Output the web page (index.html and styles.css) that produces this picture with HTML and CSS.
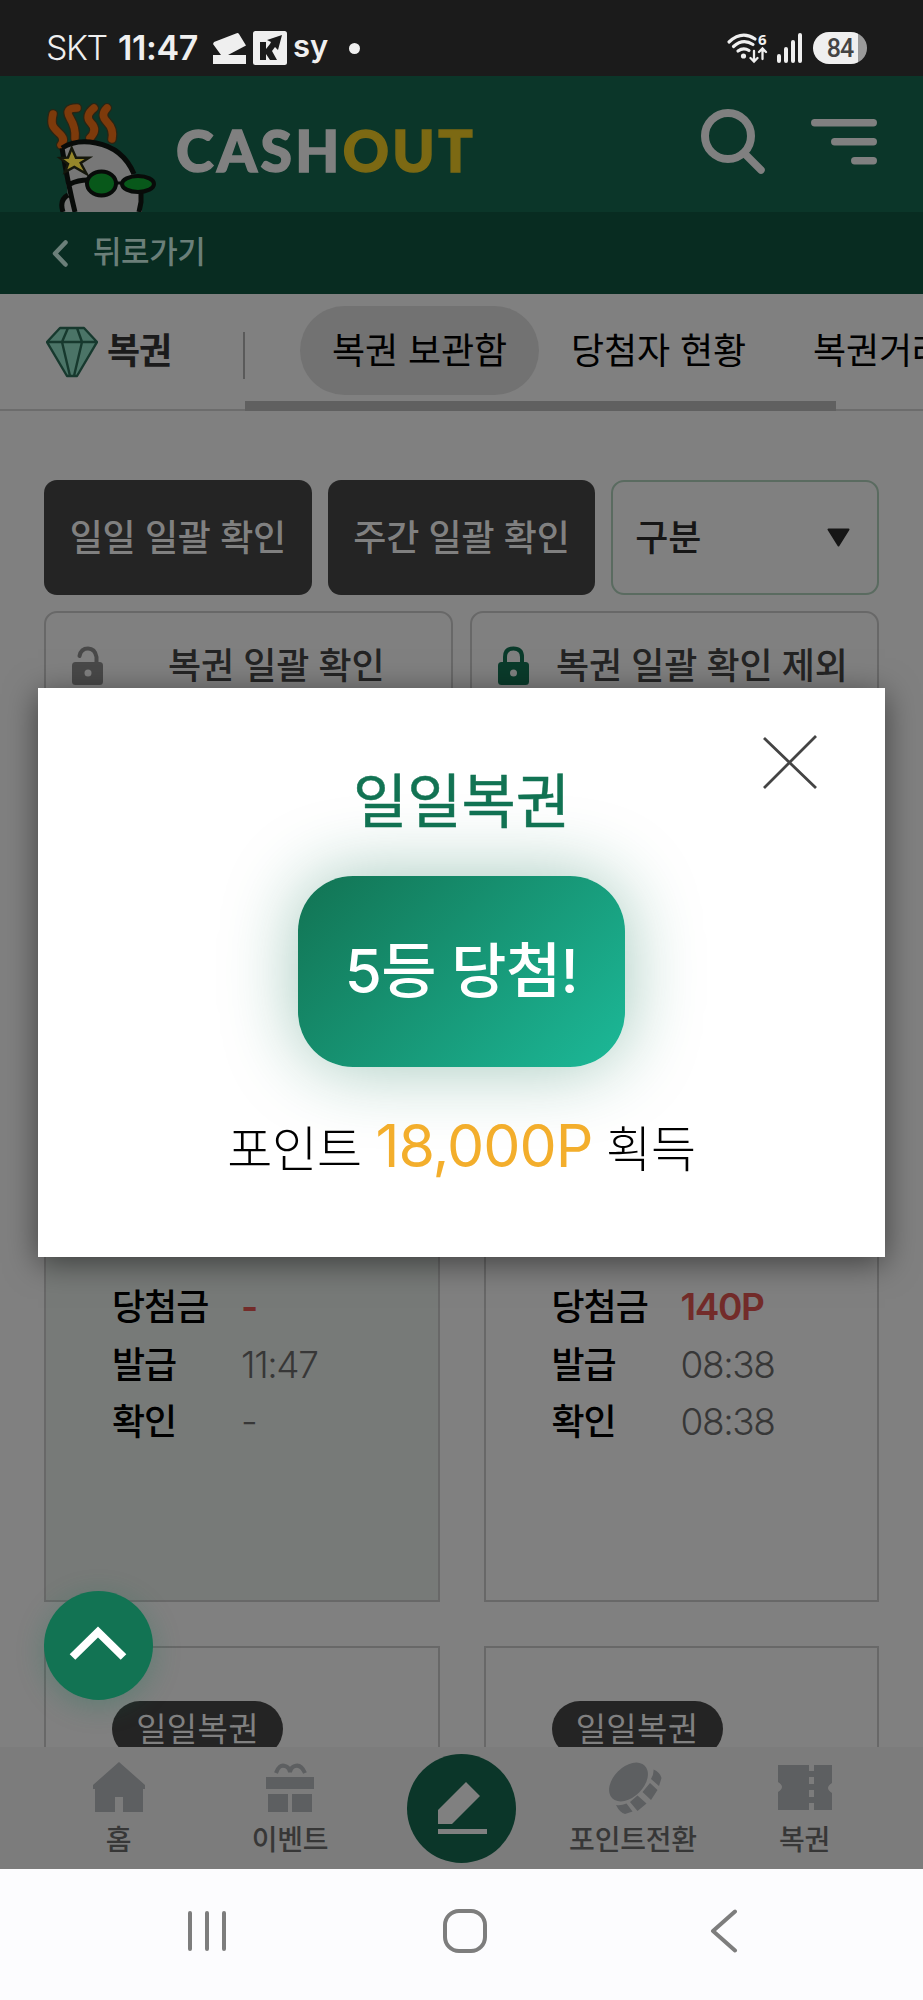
FILE: index.html
```html
<!DOCTYPE html>
<html lang="ko">
<head>
<meta charset="utf-8">
<title>CASHOUT</title>
<link rel="stylesheet" href="styles.css">
</head>
<body>
<div class="screen">
  <div class="status">
    <span class="carrier">SKT</span>
    <span class="clock">11:47</span>
    <svg class="notif" width="33" height="33" viewBox="0 0 33 33"><path d="M1 10 23 1.500q2-1 3 .5L33 13.500 15 23H33v9H0v-9H8L0 12z" fill="#efefef"/></svg>
    <svg class="notif-k" width="34" height="34" viewBox="0 0 34 34"><rect width="34" height="34" rx="2.500" fill="#efefef"/><path d="M7 11h6v7l4-5 1-2-4-2 15-5-4 15-3-3-3 4 5 9h-7l-4-6v6H7z" fill="#1b1b1b"/></svg>
    <span class="sy">sy</span>
    <span class="dot"></span>
    <svg class="signal" width="78" height="32" viewBox="0 0 78 32"><g fill="none" stroke="#efefef" stroke-width="3.200" stroke-linecap="round"><path d="M2 10Q15 -2 28 7M6.500 14.500Q16 6 26 12.500M11 19Q16.500 15 22 18.500"/><path d="M27 19v10M23.500 26l3.500 3.500 3.500-3.500M35.500 27V17M32 20l3.500-3.500 3.500 3.500" stroke-width="2.300"/><path d="M52 24v5M59 17v12M66 10v19M73 3v26" stroke-width="4"/></g><circle cx="16.500" cy="24" r="2.600" fill="#efefef"/><text x="31" y="13" class="six">6</text></svg>
    <span class="battery">84</span>
  </div>

  <header class="header">
    <svg class="mascot" width="110" height="112" viewBox="0 0 110 112">
      <g fill="none" stroke-linecap="round" stroke-linejoin="round">
        <path d="M7 14C4 26 8 28 13 33Q20 39 15 45M31 8Q18 8 24 18T29 38M48 8Q38 16 45 23T44 38M61 8Q54 15 61 22T66 39" stroke="#2a2514" stroke-width="10"/>
        <path d="M7 14C4 26 8 28 13 33Q20 39 15 45M31 8Q18 8 24 18T29 38M48 8Q38 16 45 23T44 38M61 8Q54 15 61 22T66 39" stroke="#7d3a0b" stroke-width="7.500"/>
      </g>
      <path d="M17 112Q14 103 22 96L16 48Q30 38 50 43Q76 48 87 74L96 94V112z" fill="#777"/>
      <path d="M17 112Q13 100 22 95M16 48Q22 84 29 112M16 48Q30 39 50 43Q77 48 88 74M95 90V102L93 112M24 84Q32 80 42 80" fill="none" stroke="#080b09" stroke-width="5"/>
      <path d="M25.700 48 30 57.700H43L34.700 63 40.700 74 28.300 67 19 72 22 64 14 58 22 57.500z" fill="#95862a" stroke="#15170c" stroke-width="2.500"/>
      <ellipse cx="55.500" cy="83.500" rx="14.500" ry="12" fill="#08581a" stroke="#080b09" stroke-width="4"/>
      <ellipse cx="92" cy="84" rx="16" ry="8" fill="#08581a" stroke="#080b09" stroke-width="4"/>
      <path d="M69 83h8" stroke="#080b09" stroke-width="3"/>
    </svg>
    <div class="logo">CASH<span>OUT</span></div>
    <svg class="search" width="64" height="66" viewBox="0 0 64 66" fill="none" stroke="#808080" stroke-linecap="round"><circle cx="27" cy="28" r="23" stroke-width="8"/><path d="M44 46 60 62" stroke-width="7.500"/></svg>
    <svg class="menu" width="66" height="46" viewBox="0 0 66 46" fill="#808080"><rect width="66" height="7.500" rx="3.700"/><rect x="20" y="19" width="46" height="7.500" rx="3.700"/><rect x="40" y="38" width="26" height="7.500" rx="3.700"/></svg>
  </header>

  <div class="back">
    <svg width="16" height="27" viewBox="0 0 16 27"><path d="M13.500 2.500 3 13.500l10.500 11" fill="none" stroke="#6b7f79" stroke-width="4.500" stroke-linecap="round" stroke-linejoin="round"/></svg>
    <span>뒤로가기</span>
  </div>

  <nav class="tabs">
    <svg class="gem" width="52" height="52" viewBox="0 0 52 52"><path d="M14 2h24l13 14-20 34H21L1 16z" fill="#4b7467"/><path d="M14 2h24l13 14-20 34H21L1 16zM1 16h50M22 2l-6 14 8 34M31 2l5 14-8 34" fill="none" stroke="#17392e" stroke-width="2.400" stroke-linejoin="round"/></svg>
    <strong>복권</strong>
    <i class="divider"></i>
    <a class="tab active">복권 보관함</a>
    <a class="tab">당첨자 현황</a>
    <a class="tab last">복권거래</a>
    <i class="scrollbar"></i>
  </nav>

  <main class="content">
    <div class="filters">
      <div class="btn">일일 일괄 확인</div>
      <div class="btn">주간 일괄 확인</div>
      <div class="select"><span>구분</span><svg width="23" height="19" viewBox="0 0 23 19"><path d="M1.500 1.500h20L11.500 17.500z" fill="#161616" stroke="#161616" stroke-width="2" stroke-linejoin="round"/></svg></div>
    </div>
    <div class="locks">
      <div class="lock"><svg width="31" height="39" viewBox="0 0 31 39"><path d="M7.500 10Q9 2.500 16 2.500T24.500 11v7" fill="none" stroke="#494949" stroke-width="4" stroke-linecap="round"/><rect y="16" width="31" height="23" rx="3.500" fill="#494949"/><circle cx="16" cy="27" r="3.500" fill="#808080"/></svg><span>복권 일괄 확인</span></div>
      <div class="lock wide"><svg width="31" height="39" viewBox="0 0 31 39"><path d="M7 17v-6Q7 2.500 15.500 2.500T24 11v6" fill="none" stroke="#0a3b2b" stroke-width="4"/><rect y="16" width="31" height="23" rx="3.500" fill="#0a3b2b"/><circle cx="15.500" cy="27" r="3.500" fill="#808080"/></svg><span>복권 일괄 확인 제외</span></div>
    </div>
    <div class="cards">
      <section class="card tinted">
        <dl><dt>당첨금</dt><dd class="win">-</dd><dt>발급</dt><dd>11:47</dd><dt>확인</dt><dd>-</dd></dl>
      </section>
      <section class="card">
        <dl><dt>당첨금</dt><dd class="win">140P</dd><dt>발급</dt><dd>08:38</dd><dt>확인</dt><dd>08:38</dd></dl>
      </section>
      <section class="card next"><span class="pill">일일복권</span></section>
      <section class="card next"><span class="pill">일일복권</span></section>
    </div>
  </main>

  <nav class="bottom">
    <div class="item"><svg width="54" height="52" viewBox="0 0 54 52"><path d="M27 1 53 24v4h-2v23H31V36h-8v15H3V28H1v-4z" fill="#5d5f61"/></svg><span>홈</span></div>
    <div class="item"><svg width="54" height="52" viewBox="0 0 54 52"><path d="M13 12Q16 3 22 5q4 1 5 6 1-5 5-6 6-2 10 7" fill="none" stroke="#5d5f61" stroke-width="4"/><path d="M3 16h48v12H3zM5 33h20v18H5zM29 33h20v18H29z" fill="#5d5f61"/></svg><span>이벤트</span></div>
    <div class="write"><svg width="56" height="54" viewBox="0 0 56 54" fill="#808080"><path d="M1 43V29L29 1 43 15 15 43zM1 48h49v5H1z"/></svg></div>
    <div class="item"><svg class="coin" width="54" height="54" viewBox="0 0 54 54" fill="#5d5f61"><ellipse cx="22.500" cy="21" rx="23" ry="15" transform="rotate(-45 22.500 21)"/><path d="M47.500 8.500Q54 11 55.500 17L53 25 45 18Q48 13 47.500 8.500zM44 22l7.500 7L45 39l-8.500-8zM31.500 34.500l9 8-9 7.500L24 41zM10 44q5 1 10.500-1.500l6 8L19 53q-5-1-9-9z"/></svg><span>포인트전환</span></div>
    <div class="item"><svg width="54" height="52" viewBox="0 0 54 52"><path d="M0 4h31v6h5V4h18v18q-8 5 0 10v17H36v-7h-5v7H0V31q8-5 0-10zM31 16v7h5v-7zM31 29v7h5v-7z" fill="#5d5f61" fill-rule="evenodd"/></svg><span>복권</span></div>
  </nav>

  <footer class="system">
    <svg width="40" height="42" viewBox="0 0 40 42"><path d="M3 3v36M20 3v36M37 3v36" stroke="#7d7d7d" stroke-width="4" stroke-linecap="round"/></svg>
    <svg width="44" height="44" viewBox="0 0 44 44"><rect x="2" y="2" width="40" height="40" rx="14" fill="none" stroke="#7d7d7d" stroke-width="4"/></svg>
    <svg width="28" height="44" viewBox="0 0 28 44"><path d="M25 2.500 3 22l22 19.500" fill="none" stroke="#7d7d7d" stroke-width="4" stroke-linecap="round" stroke-linejoin="round"/></svg>
  </footer>

  <div class="to-top"><svg width="58" height="36" viewBox="0 0 58 36"><path d="M3.500 32 29 7l25.500 25" fill="none" stroke="#fff" stroke-width="8"/></svg></div>

  <div class="modal">
    <svg class="close" width="54" height="54" viewBox="0 0 54 54"><path d="M1 3 53 53M53 1 1 53" stroke="#444" stroke-width="2.800"/></svg>
    <h1>일일복권</h1>
    <div class="badge">5등 당첨!</div>
    <p>포인트 <b>18,000P</b> 획득</p>
  </div>
</div>
</body>
</html>
```
FILE: styles.css
```css
* { box-sizing: border-box; }
body { margin: 0; background: #808080; font-family: Inter, "Noto Sans CJK KR", sans-serif; }
svg { display: block; flex: none; }
.screen { position: relative; width: 923px; height: 2000px; overflow: hidden; display: flex; flex-direction: column; white-space: nowrap; }

.status { height: 76px; flex: none; display: flex; align-items: center; padding: 20px 56px 0 46px; background: #1b1b1b; color: #efefef; line-height: 40px; }
.carrier { width: 72px; font: 300 34px/40px Inter; letter-spacing: -1.5px; }
.clock { width: 95px; font: 600 34px/40px Inter; letter-spacing: -.4px; }
.notif { margin-right: 7px; }
.notif-k { margin-right: 6px; }
.sy { width: 56px; font: 600 31px/40px Inter; margin-top: -5px; }
.dot { width: 11px; height: 11px; border-radius: 50%; background: #efefef; }
.signal { margin-left: auto; margin-right: 8px; overflow: visible; }
.six { font: 700 15px "Open Sans"; fill: #efefef; }
.battery { width: 54px; height: 32px; border-radius: 16px; background: linear-gradient(90deg, #efefef 45px, #9a9a9a 45px); color: #444; font: 500 25px/34px Roboto; text-align: center; letter-spacing: -1px; }

.header { height: 136px; flex: none; display: flex; align-items: flex-start; background: #0b3629; padding-left: 46px; overflow: hidden; }
.mascot { margin-top: 24px; }
.logo { margin: 40px 0 0 20px; width: 525px; font: 900 57px/68px Lato, sans-serif; color: #808080; letter-spacing: 3.4px; -webkit-text-stroke: 1.5px currentColor; }
.logo span { color: #7c6913; }
.search { margin-top: 32px; }
.menu { margin: 43px 0 0 46px; }

.back { height: 82px; flex: none; display: flex; align-items: center; gap: 25px; padding: 1px 0 0 52px; background: #082c21; color: #6b7f79; font-size: 31px; font-weight: 500; line-height: 40px; letter-spacing: -.4px; }
.back span { margin-top: -3px; }

.tabs { position: relative; height: 117px; flex: none; display: flex; align-items: flex-start; padding: 12px 0 0 46px; border-bottom: 2px solid #6c6c6c; color: #000; }
.tabs strong { flex: none; width: 91px; margin: 0 0 0 9px; font-size: 36px; line-height: 90px; letter-spacing: -1px; color: #1b1b1b; }
.gem { margin-top: 20px; }
.divider { flex: none; width: 2px; height: 47px; margin: 26px 55px 0 45px; background: #5a5a5a; }
.tab { flex: none; width: 239px; height: 89px; text-align: center; font-size: 36px; line-height: 91px; letter-spacing: -.1px; }
.tab.active { border-radius: 45px; background: #727272; }
.tab.last { text-align: left; padding-left: 35px; }
.scrollbar { position: absolute; left: 245px; top: 107px; width: 591px; height: 10px; background: #606060; }

.content { flex: 1; min-height: 0; padding: 69px 44px 0; overflow: hidden; }
.filters { display: grid; grid-template-columns: repeat(3, 1fr); gap: 16px; font-size: 36px; font-weight: 500; line-height: 116px; letter-spacing: -.2px; }
.btn { height: 115px; border-radius: 13px; background: #242424; color: #808080; text-align: center; }
.select { height: 115px; border: 2px solid #5a6b60; border-radius: 13px; color: #161616; display: flex; align-items: center; justify-content: space-between; padding: 0 27px 0 22px; }
.select span { line-height: 106px; }
.locks { display: grid; grid-template-columns: 1fr 1fr; gap: 17px; margin-top: 16px; }
.lock { height: 115px; border: 2px solid #686868; border-radius: 13px; display: flex; padding: 33px 0 0 26px; color: #242424; font-size: 36px; font-weight: 500; line-height: 36px; letter-spacing: -.2px; }
.lock span { margin: 2px 0 0 65px; }
.lock.wide span { margin-left: 27px; }
.cards { display: grid; grid-template-columns: 1fr 1fr; column-gap: 44px; row-gap: 44px; margin-top: 16px; }
.card { height: 860px; border: 2px solid #686868; padding: 538px 0 0 66px; }
.card.tinted { background: #777a78; }
.card.next { padding-top: 53px; }
.card dl { display: grid; grid-template-columns: 129px 1fr; grid-auto-rows: 57.5px; margin: 0; font-size: 36px; line-height: 50px; letter-spacing: -1px; }
.card dt { font-weight: 500; color: #000; }
.card dd { margin: 0; font-weight: 300; font-size: 37px; letter-spacing: -1.4px; color: #373737; }
.card .win { font-weight: 600; font-size: 37px; color: #732c2a; }
.pill { display: block; width: 171px; height: 56px; border-radius: 28px; background: #242424; color: #808080; text-align: center; font-size: 33px; line-height: 56px; letter-spacing: .3px; }

.bottom { height: 122px; flex: none; display: grid; grid-template-columns: repeat(5, 171.5px); justify-content: center; justify-items: center; background: #7c7c7c; }
.item { display: flex; flex-direction: column; align-items: center; padding-top: 14px; font-size: 28px; font-weight: 500; line-height: 40px; letter-spacing: -.2px; color: #373737; }
.item svg { height: 52px; }
.item .coin { height: 54px; margin-bottom: -2px; overflow: visible; }
.item span { margin-top: 7px; }
.write { width: 109px; height: 109px; margin-top: 7px; border-radius: 50%; background: #0b3629; padding: 27px 0 0 30px; }

.system { height: 131px; flex: none; background: #fcfcfe; display: flex; align-items: center; padding: 0 0 7px 187px; }
.system svg:nth-child(2) { margin-left: 216px; }
.system svg:nth-child(3) { margin-left: 223px; }

.to-top { position: absolute; left: 44px; top: 1591px; width: 109px; height: 109px; border-radius: 50%; background: #127353; box-shadow: 0 6px 28px rgba(18, 115, 83, .3); padding: 34px 0 0 25px; }

.modal { position: absolute; left: 38px; top: 688px; width: 847px; height: 569px; background: #fff; box-shadow: 0 6px 30px rgba(0, 0, 0, .5); display: flex; flex-direction: column; align-items: center; }
.close { position: absolute; right: 68px; top: 47px; }
.modal h1 { margin: 74px 0 0; font-size: 59px; line-height: 80px; font-weight: 400; color: #127353; letter-spacing: 0; -webkit-text-stroke: .5px currentColor; }
.badge { width: 327px; height: 191px; margin-top: 34px; border-radius: 55px; background: linear-gradient(135deg, #127353, #1cb998); box-shadow: 0 0 75px rgba(18, 115, 83, .4); color: #fff; text-align: center; font-size: 60px; font-weight: 500; line-height: 191px; letter-spacing: -.6px; }
.modal p { margin: 37px 0 0; font-size: 49px; font-weight: 300; line-height: 84px; letter-spacing: -.2px; color: #000; }
.modal b { font-size: 59px; font-weight: 400; letter-spacing: -1px; color: #f3ae2c; }
```
